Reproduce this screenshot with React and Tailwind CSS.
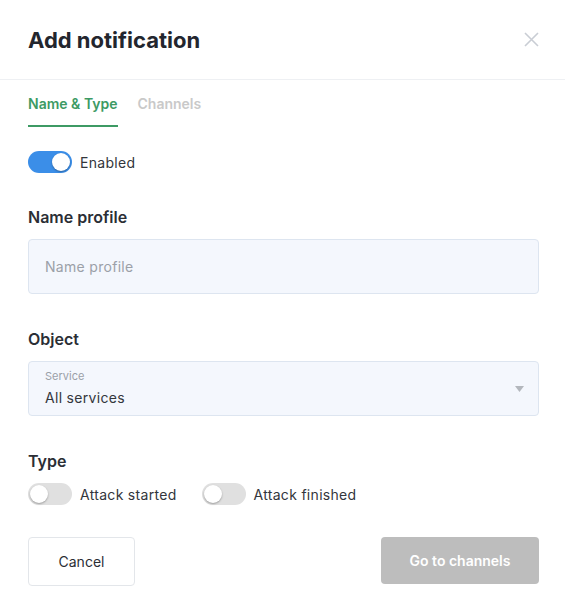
import React from "react";

function Toggle({ on }) {
  return (
    <div
      className={`relative w-[44px] h-[22px] rounded-full ${on ? "bg-[#3b8ee8]" : "bg-[#e0e0e0]"}`}
    >
      <div
        className={`absolute top-[2px] w-[18px] h-[18px] rounded-full bg-white shadow-[0_1px_2px_rgba(0,0,0,0.3)] ${on ? "left-[24px]" : "left-[2px]"}`}
      />
    </div>
  );
}

export default function App() {
  return (
    <div
      className="w-[565px] h-[614px] bg-white text-[#2b2e35]"
      style={{ fontFamily: "Inter, 'Noto Sans', sans-serif" }}
    >
      <div className="h-[80px] flex items-center justify-between pl-7 pr-[26px] border-b border-[#eef0f3]">
        <h1 className="text-[22px] font-bold text-[#23262e] leading-none">Add notification</h1>
        <svg width="15" height="15" viewBox="0 0 15 15">
          <path d="M1 1 L14 14 M14 1 L1 14" stroke="#c9cdd4" strokeWidth="1.6" />
        </svg>
      </div>
      <div className="pl-7 pr-[26px]">
        <div className="flex gap-[20px] pt-[13px]">
          <div className="text-[14px] font-semibold text-[#3d9a64] pb-[11px] border-b-2 border-[#3d9a64]">
            Name &amp; Type
          </div>
          <div className="text-[14px] font-semibold text-[#c9c9c9]">Channels</div>
        </div>
        <div className="flex items-center gap-2 mt-[24px]">
          <Toggle on />
          <span className="text-[14px] tracking-[0.3px] text-[#33363c]">Enabled</span>
        </div>
        <div className="mt-[34px] text-[16px] font-semibold text-[#2b2e35] leading-[20px]">Name profile</div>
        <div className="mt-[12px] h-[55px] rounded-[4px] bg-[#f4f7fd] border border-[#dde5f0] flex items-center px-4">
          <span className="text-[14px] tracking-[0.3px] text-[#9ba0a8]">Name profile</span>
        </div>
        <div className="mt-[35px] text-[16px] font-semibold text-[#2b2e35] leading-[20px]">Object</div>
        <div className="mt-[12px] h-[55px] rounded-[4px] bg-[#f4f7fd] border border-[#dde5f0] flex items-center justify-between pl-4 pr-[14px]">
          <div className="flex flex-col">
            <span className="text-[11px] text-[#9ba0a8] leading-[14px]">Service</span>
            <span className="text-[14px] tracking-[0.3px] text-[#33363c] leading-[20px] mt-[5px]">All services</span>
          </div>
          <svg width="9" height="6" viewBox="0 0 9 6">
            <path d="M0 0 H9 L4.5 6 Z" fill="#b3b7bd" />
          </svg>
        </div>
        <div className="mt-[35px] text-[16px] font-semibold text-[#2b2e35] leading-[20px]">Type</div>
        <div className="flex items-center mt-[12px]">
          <Toggle />
          <span className="ml-2 text-[14px] tracking-[0.3px] text-[#33363c]">Attack started</span>
          <div className="ml-[25px]">
            <Toggle />
          </div>
          <span className="ml-2 text-[14px] tracking-[0.3px] text-[#33363c]">Attack finished</span>
        </div>
        <div className="flex justify-between items-start mt-[32px]">
          <button className="w-[107px] h-[49px] rounded-[4px] border border-[#e3e6ea] bg-white text-[14px] text-[#2b2e35]">
            Cancel
          </button>
          <button className="w-[158px] h-[47px] rounded-[4px] bg-[#bdbdbd] text-[14px] font-semibold text-white">
            Go to channels
          </button>
        </div>
      </div>
    </div>
  );
}
